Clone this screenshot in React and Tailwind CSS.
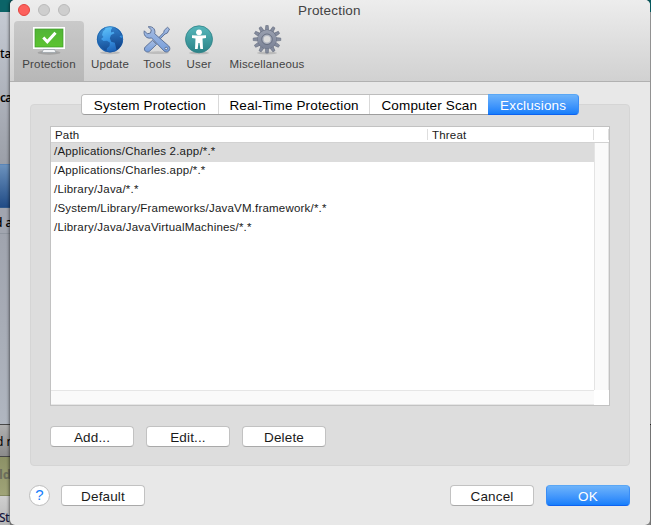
const FONT = "font-['Liberation_Sans',Arial,sans-serif]";

function MonitorIcon() {
  return (
    <svg width="34" height="30" viewBox="0 0 34 30">
      <defs>
        <linearGradient id="screen" x1="0" y1="0" x2="0" y2="1">
          <stop offset="0" stopColor="#52b437" />
          <stop offset="1" stopColor="#5cc42f" />
        </linearGradient>
      </defs>
      <ellipse cx="17" cy="27.700" rx="11.5" ry="2" fill="#8c8c8c" opacity=".55" />
      <path d="M12 22h10l1 3H11z" fill="#9aa4ae" />
      <path d="M11.500 24.500h11l1.500 3h-14z" fill="#f2f4f6" stroke="#8f989f" strokeWidth=".6" />
      <rect x="1" y="2" width="32" height="22" fill="#fff" />
      <rect x="3" y="4" width="28" height="18" fill="url(#screen)" stroke="#3c9a28" strokeWidth=".7" />
      <path d="M11.300 12.500l4 4.200 8.200-9" fill="none" stroke="#fff" strokeWidth="3" />
    </svg>
  );
}

function GlobeIcon() {
  return (
    <svg width="30" height="30" viewBox="0 0 30 30">
      <defs>
        <linearGradient id="ocean" x1=".3" y1="0" x2=".6" y2="1">
          <stop offset="0" stopColor="#63c4f8" />
          <stop offset=".5" stopColor="#3a97e6" />
          <stop offset="1" stopColor="#1c5fb4" />
        </linearGradient>
        <linearGradient id="land" x1="0" y1="0" x2="0" y2="1">
          <stop offset="0" stopColor="#2a74c2" />
          <stop offset="1" stopColor="#0b3474" />
        </linearGradient>
      </defs>
      <ellipse cx="15" cy="27.800" rx="10" ry="1.500" fill="#999" opacity=".5" />
      <circle cx="15" cy="14.300" r="13.100" fill="url(#ocean)" />
      <path d="M2.200 12C3 7.500 6 3.800 10 2.200L10.500 4 8 6.500l-1 3.500 1.500 2L6 14l2.500 2 3.500-.2 3 2-.5 3.200-2.500 2.200-.5 2.800C7 24.500 3.500 20.500 2.200 16z" fill="url(#land)" opacity=".6" />
      <path d="M16 5l1.500-2.500 3.500.2C24.500 4.300 27 7.800 27.800 11.300l-1.500-1-1.800 1.500 2.800 1.500.3 3.500c-1 4-3 6.500-6 8.500l-1.100-4.500-.7-3-3.600-1-1.400-3.500 1.200-3.200 3.500-1.800-1-1.500-2.500.8z" fill="url(#land)" opacity=".85" />
      <circle cx="15" cy="14.300" r="12.700" fill="none" stroke="#154f96" strokeWidth=".8" opacity=".7" />
    </svg>
  );
}

function ToolsIcon() {
  return (
    <svg width="30" height="30" viewBox="0 0 30 30">
      <defs>
        <linearGradient id="steel" x1="0" y1="0" x2="0" y2="1">
          <stop offset="0" stopColor="#a6bce2" />
          <stop offset="1" stopColor="#769edb" />
        </linearGradient>
      </defs>
      <ellipse cx="16" cy="27.700" rx="11" ry="1.400" fill="#999" opacity=".45" />
      <g fill="url(#steel)" stroke="#566b91" strokeWidth=".9" strokeLinejoin="round">
        <path d="M25.500 2.300l2 1.800-2.200 4-2.300.9-8.500 8.700-1.400-1.400 8.500-8.600.7-2.500z" />
        <path d="M10.500 15.300l4.100 4.100-7 6.800c-1.300 1.100-3.100 1-4.300-.1s-1.200-2.900-.1-4.100z" />
        <path d="M6.200 1.800c2.300-.5 4.600.3 5.800 2 1 1.600 1.200 3.300.7 4.900L26.700 21c1.500 1.500 1.500 3.600.1 5s-3.500 1.300-4.900-.1L9.500 12.900c-2.400.7-4.800.1-6.300-1.900-1.100-1.500-1.400-3.400-.9-5.200l3 3 3.200-.8.800-3.200z" />
        <circle cx="24.200" cy="23.500" r="1.300" fill="#e3e7ef" />
      </g>
    </svg>
  );
}

function UserIcon() {
  return (
    <svg width="30" height="30" viewBox="0 0 30 30">
      <defs>
        <linearGradient id="teal" x1="0" y1="0" x2="0" y2="1">
          <stop offset="0" stopColor="#56b7bb" />
          <stop offset="1" stopColor="#2b8287" />
        </linearGradient>
      </defs>
      <ellipse cx="15" cy="28" rx="10" ry="1.300" fill="#999" opacity=".5" />
      <circle cx="15" cy="14.300" r="13.500" fill="url(#teal)" stroke="#2e8186" strokeWidth=".8" />
      <circle cx="15" cy="7.300" r="2.900" fill="#fff" />
      <path d="M8 10.200l5 .3h4l5-.3v2.800l-3.500.6.500 10.400h-2.700L15.600 18h-1.200l-.7 6H11l.5-10.400-3.500-.6z" fill="#fff" />
    </svg>
  );
}

function GearIcon() {
  const teeth = [0, 30, 60, 90, 120, 150, 180, 210, 240, 270, 300, 330];
  return (
    <svg width="30" height="30" viewBox="0 0 30 30">
      <defs>
        <linearGradient id="iron" gradientUnits="userSpaceOnUse" x1="0" y1="0" x2="0" y2="28">
          <stop offset="0" stopColor="#a1a7b6" />
          <stop offset="1" stopColor="#747c91" />
        </linearGradient>
      </defs>
      <ellipse cx="15" cy="28" rx="10" ry="1.400" fill="#999" opacity=".5" />
      {teeth.map((a) => (
        <path key={a} d="M13.200 6L13.800 0.500h2.400L16.800 6z" transform={`rotate(${a} 15 14.300)`} fill="#858c9e" stroke="#666e80" strokeWidth=".6" />
      ))}
      <circle cx="15" cy="14.300" r="6.800" fill="none" stroke="#666e80" strokeWidth="6" />
      <circle cx="15" cy="14.300" r="6.800" fill="none" stroke="url(#iron)" strokeWidth="5.200" />
      <circle cx="15" cy="14.300" r="5.300" fill="none" stroke="#666e80" strokeWidth=".9" />
      <circle cx="15" cy="14.300" r="3.900" fill="#dcdcdc" stroke="#b1b6c1" strokeWidth="1.200" />
    </svg>
  );
}

const tools = [
  { label: "Protection", icon: MonitorIcon, size: "w-[70px] rounded-t-[4px] bg-black/12" },
  { label: "Update", icon: GlobeIcon, size: "w-[52px]" },
  { label: "Tools", icon: ToolsIcon, size: "w-[42px]" },
  { label: "User", icon: UserIcon, size: "w-[42px]" },
  { label: "Miscellaneous", icon: GearIcon, size: "w-[94px]" },
];

const tabs = [
  { label: "System Protection", size: "w-[137px] border-r border-[#d9d9d9] bg-white" },
  { label: "Real-Time Protection", size: "w-[152px] border-r border-[#d9d9d9] bg-white" },
  { label: "Computer Scan", size: "w-[118px] bg-white" },
];

const paths = [
  "/Applications/Charles 2.app/*.*",
  "/Applications/Charles.app/*.*",
  "/Library/Java/*.*",
  "/System/Library/Frameworks/JavaVM.framework/*.*",
  "/Library/Java/JavaVirtualMachines/*.*",
];

function Button({ children, primary }) {
  const look = primary
    ? "border-[#3a8df5] border-t-[#5aa7f5] border-b-[#0d62f0] bg-linear-to-b from-[#6db3fa] to-[#157efb] text-white"
    : "border-[#c2c2c2] border-b-[#a9a9a9] bg-white text-[#1a1a1a]";
  return (
    <button className={`flex h-[21px] w-[84px] items-center justify-center rounded-[4px] border pt-0.5 text-[13.5px] leading-[17px] tracking-[0.15px] ${look}`}>
      {children}
    </button>
  );
}

function Backdrop() {
  return (
    <div className="flex h-[525px] w-[10px] shrink-0 flex-col overflow-hidden whitespace-nowrap font-['Noto_Sans',sans-serif] text-[12px] text-black">
      <div className="h-3 shrink-0 bg-[#0b6468]" />
      <div className="h-[152px] shrink-0 bg-linear-to-b from-[#c5cad3] to-[#9b9fa8] pt-[33px] leading-[17px] font-medium">
        <div>ta</div>
        <div className="pt-[27px] font-semibold tracking-[-0.8px]">ca</div>
      </div>
      <div className="h-[44px] shrink-0 border-y border-[#315a8c] border-t-[#5a86b8] bg-linear-to-b from-[#6c92bd] to-[#214c86]" />
      <div className="h-[26px] shrink-0 border-b border-[#9096a0] bg-[#a1a5af] pt-[6px] leading-[17px]">
        <div className="-ml-[5px] font-medium">d a</div>
      </div>
      <div className="h-[190px] shrink-0 bg-linear-to-b from-[#a0a4ae] to-[#b0b6c0]" />
      <div className="h-[33px] shrink-0 border-y border-[#484848] bg-linear-to-b from-[#b0b0b0] to-[#8b8b8b] pt-[8px] leading-[17px]">
        <div className="-ml-[4px]">d n</div>
      </div>
      <div className="h-[39px] shrink-0 border-b border-[#858a62] bg-linear-to-b from-[#8c9166] to-[#a0a478] pt-[9px] text-[13px] leading-[17px] font-bold text-[#6c6e5c]">
        <div className="-ml-px">ld</div>
      </div>
      <div className="h-[29px] shrink-0 bg-linear-to-b from-[#cfcfcf] to-[#b8b8b8] pt-[14px] leading-[15px] font-medium text-[#18183f]">
        <div className="-ml-px tracking-[-0.5px]">St.</div>
      </div>
    </div>
  );
}

export default function App() {
  return (
    <div className={`flex h-[525px] w-[651px] overflow-hidden bg-linear-to-b from-[#07585d] from-[11px] to-[#8b8b8b] to-[12px] ${FONT}`}>
      <Backdrop />
      <main className="flex w-[640px] shrink-0 flex-col overflow-hidden rounded-[5px] bg-[#e8e8e8] shadow-[-1px_0_3px_rgba(0,0,0,0.5)]">
        <header className="flex h-[82px] shrink-0 flex-col border-b border-[#b1b1b1] bg-linear-to-b from-[#ededed] to-[#d1d1d1]">
          <div className="flex h-[21px] items-start pl-2">
            <div className="flex w-[290px] gap-2 pt-1">
              <i className="size-3 rounded-full border border-[#e2443f] bg-[#fc605c]" />
              <i className="size-3 rounded-full border border-[#bababa] bg-[#cecece]" />
              <i className="size-3 rounded-full border border-[#bababa] bg-[#cecece]" />
            </div>
            <h1 className="-ml-[10px] text-[13.5px] leading-[21px] tracking-[0.2px] text-[#434343]">Protection</h1>
          </div>
          <nav className="flex h-[60px] pl-1">
            {tools.map(({ label, icon: Icon, size }) => (
              <div key={label} className={`flex flex-col items-center pt-1 ${size}`}>
                <Icon />
                <span className="mt-[2px] text-[11.5px] leading-[14px] tracking-[0.17px] text-[#434343]">{label}</span>
              </div>
            ))}
          </nav>
        </header>

        <div className="flex flex-col px-5 pt-[22px]">
          <section className="flex h-[362px] w-[600px] flex-col rounded-[4px] border border-[#d5d5d5] bg-[#dddddd] px-[19px]">
            <div className="-mt-[11px] ml-[31px] flex h-[21px] w-[498px] text-[13.5px] leading-[17px] tracking-[0.15px] text-black">
              <div className="flex w-[408px] overflow-hidden rounded-l-[4px] border border-r-0 border-[#bdbdbd] border-b-[#9d9d9d]">
                {tabs.map(({ label, size }) => (
                  <div key={label} className={`flex items-center justify-center pt-0.5 whitespace-nowrap ${size}`}>{label}</div>
                ))}
              </div>
              <div className="flex w-[91px] items-center justify-center rounded-r-[4px] border border-l-0 border-[#3a8df5] border-t-[#5aa7f5] border-b-[#0d62f0] bg-linear-to-b from-[#6db3fa] to-[#157efb] pt-0.5 text-white">
                Exclusions
              </div>
            </div>

            <div className="mt-[11px] flex h-[280px] w-[560px] flex-col border border-[#c2c2c2] bg-white text-[11.5px] tracking-[0.2px] text-[#1a1a1a]">
              <div className="flex h-4 shrink-0 items-center border-b border-[#d2d2d2] leading-[14px]">
                <div className="flex h-[11px] w-[377px] items-center border-r border-[#dedede] pl-1">Path</div>
                <div className="flex h-[11px] w-[166px] items-center border-r border-[#dedede] pl-1">Threat</div>
                <div className="h-[11px] w-[15px] border-r border-[#dedede]" />
              </div>
              <div className="flex min-h-0 grow">
                <div className="w-[543px]">
                  {paths.map((path, i) => (
                    <div key={path} className={`h-[19px] pl-[3px] leading-[17px] whitespace-nowrap ${i === 0 ? "bg-[#dcdcdc]" : ""}`}>{path}</div>
                  ))}
                </div>
                <div className="w-[15px] border-x border-[#e4e4e4] bg-[#fafafa]" />
              </div>
              <div className="h-[15px] w-[543px] shrink-0 border-y border-[#e6e6e6] bg-[#fafafa]" />
            </div>

            <div className="mt-5 flex gap-3">
              <Button>Add...</Button>
              <Button>Edit...</Button>
              <Button>Delete</Button>
            </div>
          </section>

          <footer className="flex items-center pt-[19px]">
            <button className="-ml-px flex size-[21px] items-center justify-center rounded-full border border-[#bdbdbd] bg-white text-[15px] text-[#157efb]">?</button>
            <div className="ml-[11px]"><Button>Default</Button></div>
            <div className="ml-auto flex gap-3">
              <Button>Cancel</Button>
              <Button primary>OK</Button>
            </div>
          </footer>
        </div>
      </main>
      <aside className="flex w-px shrink-0 flex-col">
        <div className="h-3 bg-[#07585d]" />
        <div className="h-[412px] bg-[#929292]" />
        <div className="grow border-t border-[#222] bg-[#747474]" />
      </aside>
    </div>
  );
}
